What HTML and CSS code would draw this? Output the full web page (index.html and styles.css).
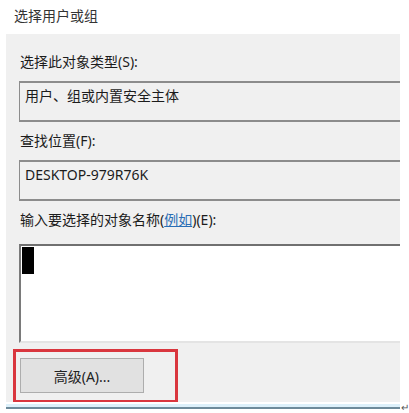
FILE: index.html
```html
<!DOCTYPE html>
<html lang="zh-CN">
<head>
<meta charset="utf-8">
<title>选择用户或组</title>
<link rel="stylesheet" href="styles.css">
</head>
<body>
<div class="title">选择用户或组</div>
<div class="panel">
  <div class="label first">选择此对象类型(S):</div>
  <div class="field">用户、组或内置安全主体</div>
  <div class="label">查找位置(F):</div>
  <div class="field">DESKTOP-979R76K</div>
  <div class="label third">输入要选择的对象名称(<span class="link">例如</span>)(E):</div>
  <div class="textarea"><div class="cursor"></div></div>
  <div class="highlight">
    <div class="button">高级(A)...</div>
  </div>
</div>
<div class="bottom">
  <div class="edge">
    <div class="edge-light"></div>
    <div class="edge-dark"></div>
  </div>
  <span class="mark">↵</span>
</div>
</body>
</html>
```

FILE: styles.css
```css
html, body {
  margin: 0;
  padding: 0;
  background: #ffffff;
}
body {
  width: 409px;
  height: 413px;
  overflow: hidden;
  font-family: "Noto Sans", "Noto Sans CJK SC", sans-serif;
  font-size: 14px;
  color: #1c1c1c;
}
.title {
  padding: 6px 0 0 14px;
  height: 20px;
  line-height: 20px;
  color: #333333;
}
.panel {
  margin: 8px 0 0 6px;
  width: 394px;
  height: 368px;
  box-sizing: border-box;
  padding: 18px 0 0 7px;
  background: #f0f0f0;
  overflow: hidden;
}
.label {
  padding-left: 7px;
  height: 20px;
  line-height: 20px;
  margin-top: 9px;
}
.label.first {
  margin-top: 0;
}
.label.third {
  margin-top: 12px;
}
.field {
  margin: 9px 0 0 6px;
  height: 34px;
  box-sizing: content-box;
  border-top: 2px solid #8c8c8c;
  border-bottom: 2px solid #8c8c8c;
  border-left: 1px solid #8c8c8c;
  padding: 3px 0 0 5px;
  line-height: 20px;
  background: #f0f0f0;
}
.field + .label {
  margin-top: 9px;
}
.label + .field {
  margin-top: 9px;
}
.panel .label:nth-of-type(2) + .field {
  margin-top: 11px;
}
.textarea {
  margin: 14px 0 0 6px;
  height: 94px;
  background: #ffffff;
  border-top: 2px solid #707070;
  border-left: 2px solid #7a7a7a;
  border-bottom: 2px solid #e4e4e4;
  padding: 1px 0 0 1px;
  box-sizing: content-box;
}
.cursor {
  width: 12px;
  height: 27px;
  background: #000000;
}
.highlight {
  margin-top: 6px;
  width: 165px;
  height: 54px;
  box-sizing: border-box;
  border: 3px solid #d9363e;
  padding: 6px 0 0 4px;
}
.button {
  width: 124px;
  height: 35px;
  box-sizing: border-box;
  background: #e1e1e1;
  border: 1px solid #adadad;
  display: flex;
  align-items: center;
  justify-content: center;
  color: #222222;
}
.link {
  color: #2a6eb5;
  text-decoration: underline;
}
.bottom {
  display: flex;
  align-items: flex-end;
  margin-left: 6px;
}
.edge {
  width: 394px;
}
.edge-light {
  height: 3px;
  background: #dcf0fa;
}
.edge-dark {
  height: 2px;
  background: #6d8a9a;
}
.mark {
  font-size: 10px;
  line-height: 10px;
  color: #555555;
  margin-left: 1px;
  margin-bottom: -3px;
}
```
